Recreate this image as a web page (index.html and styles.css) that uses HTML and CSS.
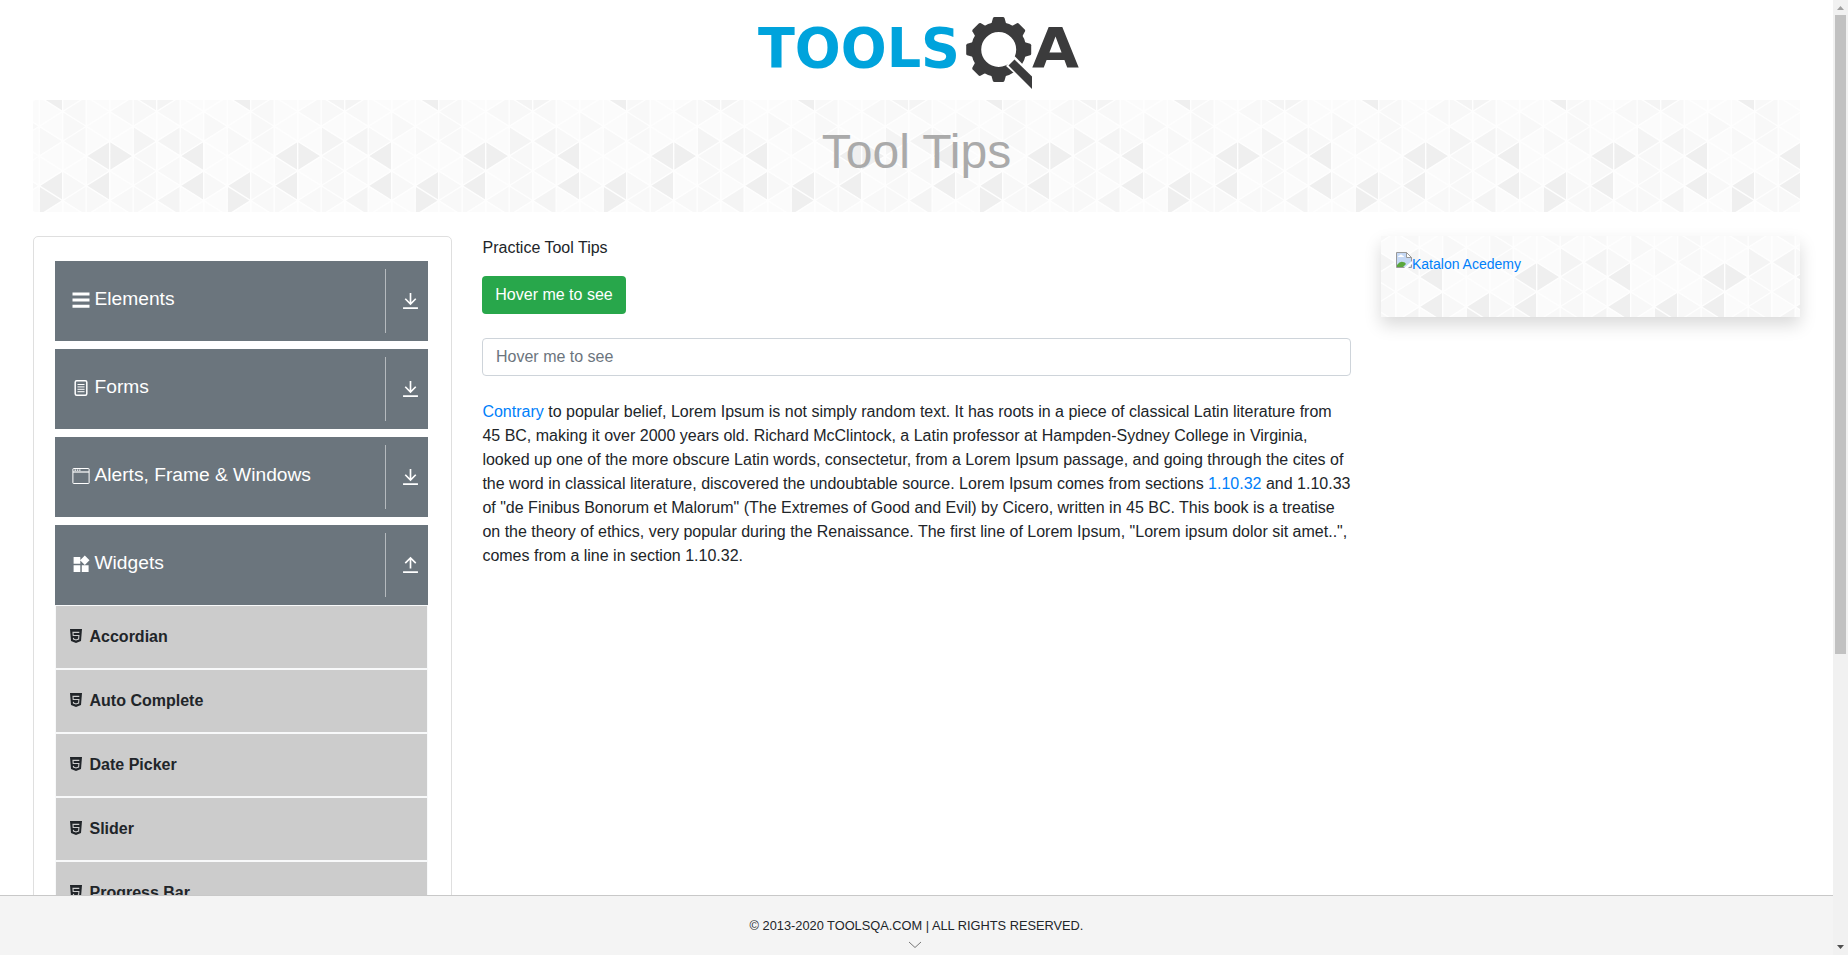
FILE: index.html
```html
<!DOCTYPE html>
<html lang="en">
<head>
<meta charset="utf-8">
<title>ToolsQA</title>
<link rel="stylesheet" href="styles.css">
</head>
<body>
<svg class="sprite" width="0" height="0" aria-hidden="true">
  <symbol id="down" viewBox="0 0 24 24"><path d="M12 3.5v12M6 10l6 6 6-6M3.5 20.7h17" fill="none" stroke="currentColor" stroke-width="1.9"/></symbol>
  <symbol id="up" viewBox="0 0 24 24"><path d="M12 16.500v-12M6 10.500l6-6 6 6M3.500 20.700h17" fill="none" stroke="currentColor" stroke-width="1.900"/></symbol>
  <symbol id="html" viewBox="0 0 14 14"><path d="M1 0h12l-1 12-5 2-5-2z" fill="currentColor"/><path d="M10.300 3.400H4l.2 3.100h5.700l-.3 3.500L7 11l-2.500-.900-.1-1.200" fill="none" stroke="#ccc" stroke-width="1.100"/></symbol>
</svg>
<div class="window">
  <div class="page">
    <header class="top">
      <svg class="logo" width="330" height="92" viewBox="754 0 330 92">
        <text class="word" x="758" y="67" textLength="202" lengthAdjust="spacingAndGlyphs">TOOLS</text>
        <g fill="#3b3b3c">
          <circle cx="998.700" cy="49.500" r="22.500" fill="none" stroke="#3b3b3c" stroke-width="10"/>
          <g>
            <path id="tooth" d="M991 25l2-7q.5-1 1.500-1h8.500q1 0 1.500 1l2 7z"/>
            <use href="#tooth" transform="rotate(45 998.700 49.500)"/>
            <use href="#tooth" transform="rotate(90 998.700 49.500)"/>
            <use href="#tooth" transform="rotate(180 998.700 49.500)"/>
            <use href="#tooth" transform="rotate(225 998.700 49.500)"/>
            <use href="#tooth" transform="rotate(270 998.700 49.500)"/>
            <use href="#tooth" transform="rotate(315 998.700 49.500)"/>
          </g>
          <path d="M1014.500 56L1042 84V98L1006 66z" fill="#fff"/>
          <path d="M1014.500 59.500L1032 76.500V89L1008.500 65.500z"/>
        </g>
        <text class="word dark" x="1032" y="67" textLength="47" lengthAdjust="spacingAndGlyphs">A</text>
      </svg>
    </header>
    <div class="container">
      <div class="banner">Tool Tips</div>
      <div class="row">
        <nav class="side">
          <div class="group">
            <svg class="gi" viewBox="0 0 18 18"><path d="M.5 1.500h17v3H.5zM.5 7.500h17v3H.5zM.5 13.700h17v3H.5z" fill="#fff"/></svg><span class="name">Elements</span>
            <span class="toggle"><svg class="arrow"><use href="#down"/></svg></span>
          </div>
          <div class="group">
            <svg class="gi" viewBox="0 0 18 18" fill="none" stroke="#fff"><rect x="3.200" y="1.800" width="11.600" height="14.400" rx="1.500" stroke-width="1.500"/><path d="M5.500 5.500h7M5.500 7.900h7M5.500 10.300h7M5.500 12.700h7"/></svg><span class="name">Forms</span>
            <span class="toggle"><svg class="arrow"><use href="#down"/></svg></span>
          </div>
          <div class="group">
            <svg class="gi" viewBox="0 0 18 18" fill="none" stroke="#fff"><rect x=".9" y="1.500" width="16.200" height="15" rx=".6"/><path d="M1 5h16" stroke-width="1.200"/><path d="M2.500 3.200h6" stroke-dasharray="1.500 .8" stroke-width="1.300"/></svg><span class="name">Alerts, Frame &amp; Windows</span>
            <span class="toggle"><svg class="arrow"><use href="#down"/></svg></span>
          </div>
          <div class="group open">
            <svg class="gi" viewBox="0 0 18 18" fill="#fff"><path d="M1.600 2h6.700v6.700H1.600zM1.600 10.300h6.700V17H1.600zM9.800 10.300h6.800V17H9.800zM12.800.6l4.700 4.700-4.700 4.700-4.700-4.700z"/></svg><span class="name">Widgets</span>
            <span class="toggle"><svg class="arrow"><use href="#up"/></svg></span>
          </div>
          <ul class="menu">
            <li class="item"><svg class="hi"><use href="#html"/></svg>Accordian</li>
            <li class="item"><svg class="hi"><use href="#html"/></svg>Auto Complete</li>
            <li class="item"><svg class="hi"><use href="#html"/></svg>Date Picker</li>
            <li class="item"><svg class="hi"><use href="#html"/></svg>Slider</li>
            <li class="item"><svg class="hi"><use href="#html"/></svg>Progress Bar</li>
          </ul>
        </nav>
        <main class="content">
          <div class="lead">Practice Tool Tips</div>
          <button class="btn">Hover me to see</button>
          <input class="field" placeholder="Hover me to see">
          <p class="text"><a>Contrary</a> to popular belief, Lorem Ipsum is not simply random text. It has roots in a piece of classical Latin literature from 45 BC, making it over 2000 years old. Richard McClintock, a Latin professor at Hampden-Sydney College in Virginia, looked up one of the more obscure Latin words, consectetur, from a Lorem Ipsum passage, and going through the cites of the word in classical literature, discovered the undoubtable source. Lorem Ipsum comes from sections <a>1.10.32</a> and 1.10.33 of "de Finibus Bonorum et Malorum" (The Extremes of Good and Evil) by Cicero, written in 45 BC. This book is a treatise on the theory of ethics, very popular during the Renaissance. The first line of Lorem Ipsum, "Lorem ipsum dolor sit amet..", comes from a line in section 1.10.32.</p>
        </main>
        <aside class="ad">
          <svg class="broken" width="16" height="16" viewBox="0 0 16 16"><path d="M.5.500h10l5 5v10H.5z" fill="#c5d8f5" stroke="#999"/><path d="M2 5q0-1.500 1.500-1.500Q5 1.500 6.500 3.500 8 3.500 8 5z" fill="#fff"/><path d="M1 15v-2q3-4 6-3 2 0 3 2l-3 3z" fill="#5aa73c"/><path d="M10.500.500v5h5z" fill="#fff" stroke="#999"/><path d="M8 16l8-7v3l-4 4z" fill="#fff"/></svg><a>Katalon Acedemy</a>
        </aside>
      </div>
    </div>
    <footer class="foot">
      <span class="copy">© 2013-2020 TOOLSQA.COM | ALL RIGHTS RESERVED.</span>
      <svg class="chev" width="14" height="8" viewBox="0 0 14 8"><path d="M1 1l6 5.500L13 1" fill="none" stroke="#777"/></svg>
    </footer>
  </div>
  <div class="scrollbar">
    <svg class="sa" viewBox="0 0 7 4"><path d="M0 4L3.500 0 7 4z" fill="#a0a0a0"/></svg>
    <div class="thumb"></div>
    <svg class="sa" viewBox="0 0 7 4"><path d="M0 0h7L3.500 4z" fill="#505050"/></svg>
  </div>
</div>
</body>
</html>
```
FILE: styles.css
```css
* { box-sizing: border-box; }
body {
  margin: 0;
  overflow: hidden;
  font: 16px/24px "Liberation Sans", Arial, sans-serif;
  color: #212529;
  background: #fff;
}
.sprite { position: absolute; }
.window { display: flex; height: 955px; overflow: hidden; }
.page { flex: 1; min-width: 0; height: 955px; display: flex; flex-direction: column; }
.top { flex: none; height: 100px; padding-left: 5px; display: flex; justify-content: center; }
.logo { display: block; }
.word { font: bold 56px "DejaVu Sans", sans-serif; fill: #00a3dc; }
.dark { fill: #3b3b3c; }
.container { flex: 1; min-height: 0; overflow: hidden; padding: 0 33px; }
.banner, .ad {
  background-color: #fbfbfb;
  background-size: 188px 112px;
  background-image: url("data:image/svg+xml,%3Csvg xmlns='http://www.w3.org/2000/svg' width='188' height='112' viewBox='0 0 188 112'%3E%3Cg fill='%23f8f8f8'%3E%3Cpath d='M29.700 11.500l23.500 14.850-23.500 14.850zM29.700 70.900l23.500 14.850-23.500 14.850zM29.700-18.200l23.500 14.850-23.500 14.850zM53.200-3.400l-23.500 14.900 23.500 14.850zM53.200 26.300l-23.500 14.900 23.500 14.850zM53.200 85.700l-23.500 14.850 23.500 14.850zM53.200 56l23.500 14.850-23.500 14.850zM53.200 85.700l23.500 14.850-23.500 14.850zM100.200-3.400l-23.500 14.900 23.500 14.850zM100.200 85.700l-23.500 14.850 23.500 14.850zM100.200-3.400l23.500 14.900-23.500 14.850zM100.200 56l23.500 14.850-23.500 14.850zM100.200 85.700l23.500 14.850-23.500 14.850zM123.700 41.200l-23.500 14.850 23.500 14.850zM123.700 70.900l-23.500 14.850 23.500 14.850zM147.200-3.400l-23.500 14.900 23.500 14.850zM147.200 56l-23.500 14.850 23.500 14.850zM147.200 26.300l23.500 14.900-23.500 14.850zM6.200 26.300l23.500 14.900-23.500 14.850zM170.700 11.500l23.500 14.850-23.500 14.850zM-17.300 11.500l23.500 14.850-23.500 14.850zM170.700 70.900l23.500 14.850-23.500 14.850zM-17.300 70.900l23.500 14.850-23.500 14.850z'/%3E%3C/g%3E%3Cpath fill='%23f4f4f4' d='M123.700-18.200l-23.500 14.850 23.500 14.850zM123.700-18.200l23.500 14.850-23.500 14.850zM100.200 26.300l23.500 14.900-23.500 14.850zM147.200 26.300l-23.500 14.900 23.500 14.850zM147.200 85.700l-23.500 14.850 23.500 14.850z'/%3E%3Cpath fill='%23efefef' d='M29.700-18.200l-23.500 14.850 23.500 14.850zM76.700 41.200l-23.500 14.850 23.500 14.850zM76.700 41.200l23.500 14.850-23.500 14.850zM170.700 41.200l-23.500 14.850 23.500 14.850zM29.700 70.900l-23.500 14.850 23.500 14.850zM6.200 85.700l23.500 14.850-23.500 14.850zM76.700 70.900l-23.500 14.850 23.500 14.850zM170.700 70.900l-23.500 14.850 23.500 14.850z'/%3E%3Cpath fill='none' stroke='%23fefefe' stroke-width='1.400' d='M6.200 0v112M29.700 0v112M53.200 0v112M76.700 0v112M100.200 0v112M123.700 0v112M147.200 0v112M170.700 0v112M-17.300-137l211.500 133.650M-17.300-107.300l211.500 133.650M-17.300-77.600l211.500 133.650M-17.300-47.900l211.500 133.650M-17.300-18.200l211.500 133.650M-17.300 11.500l211.500 133.650M-17.300 41.200l211.500 133.650M-17.300 70.900l211.500 133.650M-17.300 100.600l211.500 133.650M-17.300 11.500l211.500-133.650M-17.300 41.200l211.500-133.650M-17.300 70.900l211.500-133.650M-17.300 100.600l211.500-133.650M-17.300 130.300l211.500-133.650M-17.300 160l211.500-133.650M-17.300 189.700l211.500-133.650M-17.300 219.400l211.500-133.650'/%3E%3C/svg%3E");
}
.banner {
  height: 112px;
  padding-top: 23px;
  font-size: 48px;
  line-height: 58px;
  text-align: center;
  color: #aaa;
}
.row { display: flex; align-items: flex-start; margin-top: 24px; }
.side {
  width: 419px;
  height: 800px;
  flex: none;
  padding: 24px 23px 0 21px;
  border: 1px solid #dfdfdf;
  border-radius: 5px;
}
.group {
  display: flex;
  align-items: center;
  height: 80px;
  margin-bottom: 8px;
  padding-left: 16.500px;
  background: #6b757d;
  color: #fff;
  font-size: 19.200px;
}
.group.open { margin-bottom: 0; }
.gi { width: 18px; height: 18px; margin: 0 5px 2px 0; flex: none; }
.name { flex: 1; padding-bottom: 4px; }
.toggle {
  display: flex;
  align-items: center;
  justify-content: center;
  width: 43px;
  height: 64px;
  padding: 0 0 2px 6px;
  border-left: 1px solid #b5babe;
}
.arrow { width: 21px; height: 21px; flex: none; }
.menu { list-style: none; margin: 0; padding: 0; }
.item {
  display: flex;
  align-items: center;
  height: 64px;
  padding: 0 0 0 14px;
  border: 1px solid #f8f9fa;
  background: #ccc;
  font-weight: bold;
}
.hi { width: 14px; height: 14px; margin: 0 6.500px 2px -1px; color: #212529; }
.content { width: 869px; margin-left: 30px; flex: none; }
.lead { padding-left: .5px; }
.btn {
  display: block;
  width: 144px;
  height: 38px;
  margin: 16px 0 24px;
  padding: 0;
  border: 0;
  border-radius: 4px;
  background: #28a74b;
  color: #fff;
  font: inherit;
}
.field {
  display: block;
  width: 100%;
  height: 38px;
  padding: 6px 13px;
  border: 1px solid #ced4da;
  border-radius: 4px;
  font: inherit;
}
.field::placeholder { color: #6c757d; opacity: 1; }
.text { margin: 24px 0 0; padding-left: .4px; }
a { color: #0080fa; }
.ad {
  display: flex;
  align-items: flex-start;
  width: 419px;
  height: 81px;
  margin-left: 30px;
  padding: 16px 15px;
  font-size: 14px;
  background-position: 78.500px -15.500px;
  box-shadow: 0 8px 16px rgba(0, 0, 0, .15);
}
.foot {
  flex: none;
  height: 60px;
  padding-top: 18px;
  border-top: 1px solid #c8c8c8;
  background: #f4f4f4;
  display: flex;
  flex-direction: column;
  align-items: center;
  font-size: 12.800px;
}
.copy { line-height: 24px; }
.chev { margin-top: 3px; margin-right: 3px; }
.scrollbar {
  width: 15px;
  height: 955px;
  display: flex;
  flex-direction: column;
  align-items: center;
  justify-content: space-between;
  padding: 6px 0;
  background: #f1f1f1;
}
.sa { width: 7px; height: 4px; }
.thumb { width: 11px; height: 639px; margin: 5px 0 auto; background: #c1c1c1; }
```
